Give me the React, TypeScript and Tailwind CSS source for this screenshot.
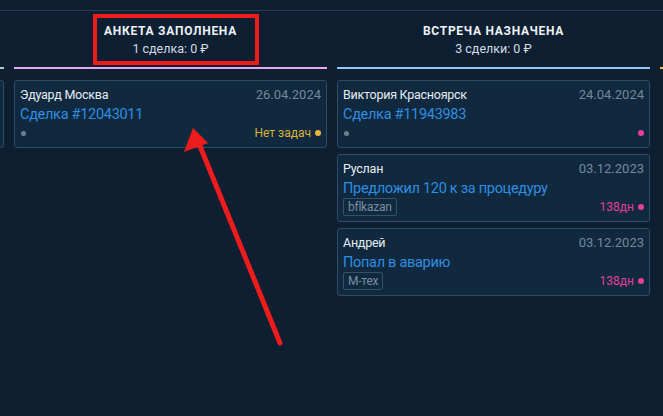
import React from "react";

type Deal = {
  name: string;
  date: string;
  title: string;
  tag?: string;
  left?: "dot";
  right?: { text?: string; color: "yellow" | "pink" };
};

const columns: { title: string; sub: string; line: string; deals: Deal[] }[] = [
  {
    title: "",
    sub: "",
    line: "bg-[#b9c6d6]",
    deals: [{ name: "", date: "", title: "" }],
  },
  {
    title: "Анкета заполнена",
    sub: "1 сделка: 0 ₽",
    line: "bg-[#e6a8f0]",
    deals: [
      {
        name: "Эдуард Москва",
        date: "26.04.2024",
        title: "Сделка #12043011",
        left: "dot",
        right: { text: "Нет задач", color: "yellow" },
      },
    ],
  },
  {
    title: "Встреча назначена",
    sub: "3 сделки: 0 ₽",
    line: "bg-[#8ec8f6]",
    deals: [
      {
        name: "Виктория Красноярск",
        date: "24.04.2024",
        title: "Сделка #11943983",
        left: "dot",
        right: { color: "pink" },
      },
      {
        name: "Руслан",
        date: "03.12.2023",
        title: "Предложил 120 к за процедуру",
        tag: "bflkazan",
        right: { text: "138дн", color: "pink" },
      },
      {
        name: "Андрей",
        date: "03.12.2023",
        title: "Попал в аварию",
        tag: "М-тех",
        right: { text: "138дн", color: "pink" },
      },
    ],
  },
  {
    title: "",
    sub: "",
    line: "bg-[#f2c230]",
    deals: [],
  },
];

function DealCard({ deal }: { deal: Deal }) {
  const rightColor = deal.right?.color === "yellow" ? "text-[#d9b23a]" : "text-[#e0409a]";
  const dotColor = deal.right?.color === "yellow" ? "bg-[#e5b83a]" : "bg-[#e93c9c]";
  return (
    <div className="flex h-[68px] flex-col rounded-[3px] border border-[#2f4b66] bg-[#10293f] px-[5px] pt-[6px]">
      <div className="flex items-baseline justify-between leading-[16px]">
        <span className="text-[12.5px] tracking-[-0.02em] text-[#e6ecf2]">{deal.name}</span>
        <span className="text-[13px] text-[#75889b]">{deal.date}</span>
      </div>
      <div className="mt-[2px] whitespace-nowrap text-[14.5px] leading-[19px] tracking-[-0.02em] text-[#2f8ee0]">
        {deal.title}
      </div>
      <div className="mt-auto mb-[5px] flex h-[18px] items-center justify-between">
        <div className="flex items-center">
          {deal.left && <span className="ml-[1px] h-[5px] w-[5px] rounded-full bg-[#6e7e8e]" />}
          {deal.tag && (
            <span className="rounded-[2px] border border-[#34506a] px-[4px] text-[12px] leading-[16px] tracking-[-0.02em] text-[#7a8da0]">
              {deal.tag}
            </span>
          )}
        </div>
        {deal.right && (
          <div className={`flex items-center gap-[4px] text-[12px] leading-[16px] ${rightColor}`}>
            {deal.right.text && <span>{deal.right.text}</span>}
            <span className={`h-[6px] w-[6px] rounded-full ${dotColor}`} />
          </div>
        )}
      </div>
    </div>
  );
}

export default function App() {
  return (
    <div
      className="relative h-[416px] w-[663px] overflow-hidden bg-[#0d1f31]"
      style={{ fontFamily: "Roboto, 'Noto Sans', sans-serif" }}
    >
      <div className="mt-[10px] border-t border-[#2a3d52]">
        <div className="-ml-[309px] flex gap-[10px]">
          {columns.map((col, i) => (
            <div key={i} className="w-[313px] shrink-0">
              <div className="flex h-[56px] flex-col items-center justify-center pt-[1px]">
                {col.title && (
                  <>
                    <div className="text-[12px] font-bold uppercase leading-[16px] tracking-[0.06em] text-[#eef2f6]">
                      {col.title}
                    </div>
                    <div className="mt-[2px] text-[12.5px] leading-[16px] text-[#d4dce4]">{col.sub}</div>
                  </>
                )}
              </div>
              <div className={`h-[2px] ${col.line}`} />
              <div className="mt-[11px] flex flex-col gap-[6px]">
                {col.deals.map((d, j) => (
                  <DealCard key={j} deal={d} />
                ))}
              </div>
            </div>
          ))}
        </div>
      </div>

      {/* annotation */}
      <div className="absolute left-[93px] top-[14px] h-[51px] w-[166px] border-[4px] border-[#ee1c1c]" />
      <svg className="absolute left-0 top-0" width="663" height="416" viewBox="0 0 663 416">
        <line x1="280" y1="343" x2="200" y2="146" stroke="#ee1c1c" strokeWidth="5" strokeLinecap="round" />
        <polygon points="193,128 184,152 208,143" fill="#ee1c1c" />
      </svg>
    </div>
  );
}
